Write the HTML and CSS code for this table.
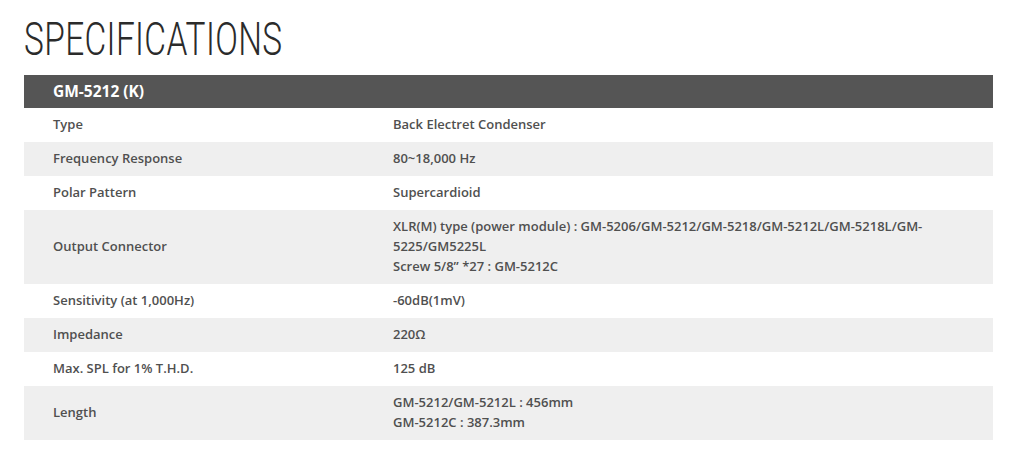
FILE: index.html
```html
<!DOCTYPE html>
<html>
<head>
<meta charset="utf-8">
<link rel="stylesheet" href="styles.css">
</head>
<body>
<div class="page">
  <h1 class="title"><span class="title-text">SPECIFICATIONS</span></h1>
  <table class="spec">
    <colgroup><col class="col-k"><col class="col-v"></colgroup>
    <thead>
      <tr><th colspan="2">GM-5212 (K)</th></tr>
    </thead>
    <tbody>
      <tr><td class="k">Type</td><td class="v">Back Electret Condenser</td></tr>
      <tr><td class="k">Frequency Response</td><td class="v">80~18,000 Hz</td></tr>
      <tr><td class="k">Polar Pattern</td><td class="v">Supercardioid</td></tr>
      <tr><td class="k">Output Connector</td><td class="v">XLR(M) type (power module) : GM-5206/GM-5212/GM-5218/GM-5212L/GM-5218L/GM-5225/GM5225L<br>Screw 5/8” *27 : GM-5212C</td></tr>
      <tr><td class="k">Sensitivity (at 1,000Hz)</td><td class="v">-60dB(1mV)</td></tr>
      <tr><td class="k">Impedance</td><td class="v">220Ω</td></tr>
      <tr><td class="k">Max. SPL for 1% T.H.D.</td><td class="v">125 dB</td></tr>
      <tr><td class="k">Length</td><td class="v">GM-5212/GM-5212L : 456mm<br>GM-5212C : 387.3mm</td></tr>
    </tbody>
  </table>
</div>
</body>
</html>
```
FILE: styles.css
```css
html, body {
  margin: 0;
  padding: 0;
  background: #ffffff;
}
.page {
  padding: 16px 22px 0 24px;
  width: 969px;
  font-family: "Open Sans", "Liberation Sans", sans-serif;
}
.title {
  margin: 0;
  height: 59px;
  font-family: "Roboto", "Liberation Sans", sans-serif;
  font-weight: 300;
  font-size: 46px;
  line-height: 46px;
  color: #2b2b2b;
  white-space: nowrap;
}
.title-text {
  display: inline-block;
  transform: scaleX(0.727);
  transform-origin: 0 0;
  letter-spacing: 0.5px;
}
.spec {
  width: 969px;
  table-layout: fixed;
  border-collapse: collapse;
  font-size: 13px;
  font-weight: 600;
  color: #505050;
}
.col-k {
  width: 369px;
}
.col-v {
  width: 600px;
}
.spec th {
  background: #555555;
  color: #ffffff;
  text-align: left;
  font-size: 15.5px;
  font-weight: 700;
  height: 33px;
  padding: 0 0 1px 29px;
  box-sizing: border-box;
}
.spec td {
  padding: 6px 29px 8px;
  line-height: 20px;
  vertical-align: middle;
}
.spec td.v {
  padding: 6px 40px 8px 0;
}
.spec tbody tr:nth-child(even) td {
  background: #efefef;
}
```
